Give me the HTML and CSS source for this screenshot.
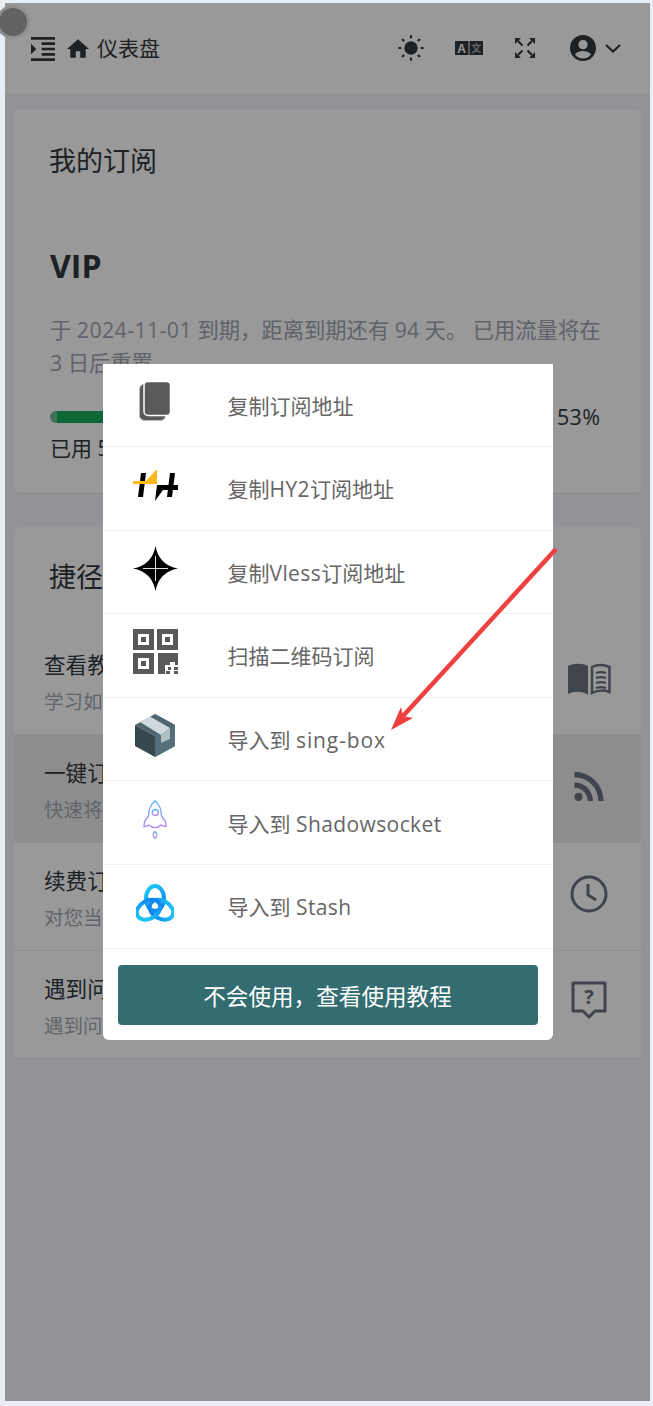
FILE: index.html
```html
<!DOCTYPE html>
<html lang="zh-CN">
<head>
<meta charset="utf-8">
<title>仪表盘</title>
<link rel="stylesheet" href="styles.css">
</head>
<body>
<div class="frame">
  <header class="topbar">
    <div class="topbar-left">
      <svg class="ic-indent" viewBox="3 3 18 18" fill="#32373c"><path d="M3 21h18v-2H3v2zM3 8v8l4-4-4-4zm8 9h10v-2H11v2zM3 3v2h18V3H3zm8 6h10V7H11v2zm0 4h10v-2H11v2z"/></svg>
      <svg class="ic-home" viewBox="2 3 20 17" fill="#32373c"><path d="M10 20v-6h4v6h5v-8h3L12 3 2 12h3v8z"/></svg>
      <span class="crumb">仪表盘</span>
    </div>
    <div class="topbar-right">
      <svg class="ic-sun" viewBox="0 0 26 26" fill="#32373c"><circle cx="13" cy="13" r="6.700"/><g stroke="#32373c" stroke-width="2.200" stroke-linecap="round"><path d="M13 1.200v1.300M13 23.500v1.300M1.200 13h1.300M23.500 13h1.300M4.700 4.700l.8.8M20.500 20.500l.8.8M4.700 21.300l.8-.8M20.500 5.500l.8-.8"/></g></svg>
      <svg class="ic-lang" viewBox="0 0 28 14"><rect width="13.500" height="14" fill="#32373c"/><rect x="14.500" width="13.500" height="14" fill="#32373c"/><text x="6.700" y="11.500" class="ic-lang-a">A</text><text x="21.200" y="11" class="ic-lang-b">文</text></svg>
      <svg class="ic-expand" viewBox="0 0 20 20" fill="#32373c" stroke="none"><path d="M0 0h6L0 6zM20 0h-6l6 6zM0 20h6l-6-6zM20 20h-6l6-6z"/><path fill="none" stroke="#32373c" stroke-width="2.200" d="M3 3l4.500 4.500M17 3l-4.500 4.500M3 17l4.500-4.500M17 17l-4.500-4.500"/></svg>
      <div class="user">
        <svg class="ic-user" viewBox="2 2 20 20" fill="#32373c"><path fill-rule="evenodd" d="M12 2a10 10 0 1 0 0 20 10 10 0 0 0 0-20zm0 3.800a3.600 3.600 0 1 1 0 7.200 3.600 3.600 0 0 1 0-7.200zm0 14.200a8 8 0 0 1-6.200-3c.9-1.700 3.600-2.700 6.200-2.700s5.300 1 6.200 2.700a8 8 0 0 1-6.200 3z"/></svg>
        <svg class="ic-chev" viewBox="0 0 16 9" fill="none" stroke="#32373c" stroke-width="2.200"><path d="M1 1l7 6.500L15 1"/></svg>
      </div>
    </div>
  </header>

  <main class="content">
    <section class="card card-sub">
      <h2 class="card-title">我的订阅</h2>
      <div class="plan">VIP</div>
      <p class="desc">于 <span class="lat">2024-11-01</span> 到期，距离到期还有 94 天。 已用流量将在 3 日后重置</p>
      <div class="progress-row">
        <div class="track"><div class="fill" style="width:53%"></div></div>
        <span class="pct">53%</span>
      </div>
      <div class="used">已用 53.20 GB / 总计 100.00 GB</div>
    </section>

    <section class="card card-links">
      <h2 class="card-title card-title-b">捷径</h2>
      <div class="row">
        <div><div class="row-t">查看教程</div><div class="row-s">学习如何使用 V2Board</div></div>
        <svg class="ric ric-book" viewBox="0 0 43 32"><path fill="#6b7380" d="M0 3C6 0 15 0 20 3v29C15 28 6 28 0 31z"/><path fill="none" stroke="#6b7380" stroke-width="2.500" d="M24 4c5-2.500 12-2.500 17.500 0v25c-5-1.800-12-1.800-17.500 1z"/><path stroke="#6b7380" stroke-width="2.200" d="M28 10c3-1 7-1 10 0M28 15c3-1 7-1 10 0M28 20c3-1 7-1 10 0M28 25c3-1 7-1 10 0"/></svg>
      </div>
      <div class="row row-hover">
        <div><div class="row-t">一键订阅</div><div class="row-s">快速将节点导入对应客户端进行使用</div></div>
        <svg class="ric ric-rss" viewBox="4 4 15.560 16" fill="#6b7380"><path d="M6.180 15.640a2.180 2.180 0 0 1 2.180 2.180C8.360 19 7.380 20 6.180 20 5 20 4 19 4 17.820a2.180 2.180 0 0 1 2.180-2.180M4 4.440A15.560 15.560 0 0 1 19.560 20h-2.830A12.730 12.730 0 0 0 4 7.270V4.440m0 5.660a9.900 9.900 0 0 1 9.900 9.900h-2.830A7.070 7.070 0 0 0 4 12.930V10.100z"/></svg>
      </div>
      <div class="row">
        <div><div class="row-t">续费订阅</div><div class="row-s">对您当前的订阅进行续费</div></div>
        <svg class="ric ric-clock" viewBox="0 0 38 38" fill="none" stroke="#6b7380" stroke-width="3"><circle cx="19" cy="19" r="17"/><path d="M18 9v11l8 5"/></svg>
      </div>
      <div class="row">
        <div><div class="row-t">遇到问题</div><div class="row-s">遇到问题可以通过工单与我们沟通</div></div>
        <svg class="ric ric-help" viewBox="0 0 38 38"><path fill="none" stroke="#6b7380" stroke-width="3" stroke-linejoin="round" d="M3 2h32v28H25l-6 6-6-6H3z"/><text x="19" y="23" class="ric-q">?</text></svg>
      </div>
    </section>
  </main>

  <div class="overlay">
    <div class="modal">
      <ul class="menu">
        <li class="item"><span class="item-ic"><svg class="i-copy" viewBox="0 0 32 40"><rect x="0.500" y="3" width="26" height="36.500" rx="5" fill="#5a5a5a" stroke="#bbb"/><rect x="5" y="0.500" width="26.500" height="34" rx="4" fill="#5a5a5a" stroke="#fff" stroke-width="1.500"/></svg></span><span class="item-t">复制订阅地址</span></li>
        <li class="item"><span class="item-ic"><svg class="i-hy" viewBox="0 0 45 32"><path d="M8 4h5l-3 24H5zM37 4h5l-3 24h-5z"/><path fill="#fdb813" d="M24 0v15H0v-3h13z"/><path d="M22 32l2-16h21v5H30z"/></svg></span><span class="item-t">复制<span class="lat">HY2</span>订阅地址</span></li>
        <li class="item"><span class="item-ic"><svg class="i-star" viewBox="0 0 45 45"><path d="M22.500 0Q26 19 45 22.500 26 26 22.500 45 19 26 0 22.500 19 19 22.500 0z"/><path stroke="#ddd" stroke-width="1" d="M22.500 10v25M10 22.500h25"/></svg></span><span class="item-t">复制<span class="lat">Vless</span>订阅地址</span></li>
        <li class="item"><span class="item-ic"><svg class="i-qr" viewBox="0 0 45 45"><g fill="#595959"><path fill-rule="evenodd" d="M0 0h21v21H0zM5 5v11h11V5zM24 0h21v21H24zM29 5v11h11V5zM0 24h21v21H0zM5 29v11h11V29z"/><path d="M8 8h5v5H8zM32 8h5v5h-5zM8 32h5v5H8zM25 24h20v12h-3v-3h-5v3h-5v9h-2v3h-5zM35 38h3v3h-3zM41 38h4v3h-4zM33 42h4v3h-4zM41 42h4v3h-4z"/></g></svg></span><span class="item-t">扫描二维码订阅</span></li>
        <li class="item"><span class="item-ic"><svg class="i-box" viewBox="0 0 42 44"><path fill="#546e7a" d="M21 0l20 11v21L21 43z"/><path fill="#4f6670" d="M21 0l20 11-20 11L1 11z"/><path fill="#37474f" d="M1 11l20 11v21L1 32z"/><path fill="#546e7a" d="M21 22l20-11v21L21 43z"/><path fill="#cfd8dc" d="M6 8l10-5.500L36 14 27 21z"/><path fill="#b0bec5" d="M27 21l9-7v11l-9 4z"/></svg></span><span class="item-t">导入到 <span class="lat-w">sing-box</span></span></li>
        <li class="item"><span class="item-ic"><svg class="i-rocket" viewBox="0 0 24 39" fill="none" stroke="url(#rk)" stroke-width="1.400"><defs><linearGradient id="rk" x1="0" y1="0" x2="0" y2="1"><stop offset="0" stop-color="#5fb6f8"/><stop offset="1" stop-color="#b88cf5"/></linearGradient></defs><path d="M12 .8C7 5 5.500 10 5.500 16L1.500 21.500 1 26.500c2 0 4-.6 5-1.500 1.500 1.500 3 2.600 6 2.600S16.500 26.500 18 25c1 .9 3 1.500 5 1.500l-.5-5L18.500 16C18.500 10 17 5 12 .8z"/><circle cx="12.300" cy="12.500" r="3"/><path d="M12 31.500c-2.500 2.500-2.500 4.500 0 7 2.500-2.500 2.500-4.500 0-7z"/></svg></span><span class="item-t">导入到 <span class="lat">Shadowsocket</span></span></li>
        <li class="item"><span class="item-ic"><svg class="i-stash" viewBox="0 0 38 38" fill="none" stroke-width="4"><defs><linearGradient id="st" gradientUnits="userSpaceOnUse" x1="5" y1="5" x2="33" y2="35"><stop offset="0" stop-color="#1fd3f6"/><stop offset="1" stop-color="#0a5fef"/></linearGradient></defs><g stroke="url(#st)"><ellipse cx="19" cy="14.500" rx="9" ry="12.500"/><ellipse cx="19" cy="14.500" rx="9" ry="12.500" transform="rotate(120 19 22)"/><ellipse cx="19" cy="14.500" rx="9" ry="12.500" transform="rotate(240 19 22)"/></g></svg></span><span class="item-t">导入到 <span class="lat">Stash</span></span></li>
      </ul>
      <div class="modal-foot"><button class="help-btn">不会使用，查看使用教程</button></div>
    </div>
  </div>
</div>

<svg class="arrow" viewBox="0 0 653 1406"><path fill="none" stroke="#ef4040" stroke-width="4.500" d="M556 549L403 716"/><path fill="#ef4040" d="M391 730l10-23 2 9 10 2z"/></svg>
<div class="touch"></div>
</body>
</html>
```
FILE: styles.css
```css
* { box-sizing: border-box; }
html, body { margin: 0; padding: 0; }
body {
  width: 653px;
  height: 1406px;
  overflow: hidden;
  background: #e9eef5;
  font-family: "Open Sans", "Noto Sans CJK SC", sans-serif;
  color: #32373c;
  position: relative;
}
.frame {
  position: relative;
  margin: 3px 3px 0 5px;
  width: 645px;
  height: 1398px;
  background: #f3f5fb;
  overflow: hidden;
}
.lat { letter-spacing: .4px; }
.lat-w { letter-spacing: .9px; }
.topbar {
  height: 90px;
  background: #fff;
  display: flex;
  align-items: center;
  justify-content: space-between;
  padding: 0 29px 0 26px;
}
.topbar-left { display: flex; align-items: center; }
.topbar-right { display: flex; align-items: center; gap: 30px; }
.ic-indent { width: 24px; height: 24px; margin-top: 2px; }
.ic-home { width: 22px; height: 19px; margin-left: 12px; }
.crumb { font-size: 21px; line-height: 30px; margin-left: 8px; }
.ic-sun { width: 26px; height: 26px; display: block; margin-right: 0; }
.ic-lang { width: 28px; height: 14px; display: block; margin-left: 1px; }
.ic-lang-a { font: 700 12px "Liberation Sans", sans-serif; fill: #fff; text-anchor: middle; }
.ic-lang-b { font: 700 10px "Noto Sans CJK SC", sans-serif; fill: #aaa; text-anchor: middle; }
.ic-expand { width: 20px; height: 20px; display: block; margin: 0 3px 0 2px; }
.user { display: flex; align-items: center; gap: 9px; margin-left: 2px; }
.ic-user { width: 26px; height: 26px; display: block; }
.ic-chev { width: 16px; height: 9px; display: block; }

.content { padding: 16px 9px 0; display: flex; flex-direction: column; gap: 34px; }
.card { background: #fff; border-radius: 6px; box-shadow: 0 1px 2px rgba(0,0,0,.04); overflow: hidden; }
.card-sub { padding: 34px 36px 30px; }
.card-title { margin: 0 0 0 -1px; font-size: 27px; line-height: 36px; font-weight: 400; }
.card-title-b { padding: 32px 36px 32px; }
.plan { margin-top: 65px; font-size: 32px; line-height: 44px; font-weight: 700; }
.desc { margin: 25px 0 0; font-size: 21.300px; line-height: 33px; color: #9fa5b0; }
.progress-row { margin-top: 26px; display: flex; align-items: center; gap: 17px; height: 24px; }
.track { flex: 1; height: 12px; background: #eceef3; border-radius: 6px; overflow: hidden; }
.fill { height: 100%; background: linear-gradient(90deg, #6cbf92 0, #6cbf92 7px, #19aa5c 7px); }
.pct { font-size: 21.500px; line-height: 24px; width: 48px; letter-spacing: .3px; }
.used { margin-top: 3.500px; font-size: 21px; line-height: 30px; }

.row {
  height: 108px;
  padding: 23px 30px 0;
  display: flex;
  justify-content: space-between;
  border-bottom: 1px solid #ebedf1;
}
.row-hover { background: #ececec; border-bottom: 0; border-radius: 0 0 4px 4px; }
.row-t { font-size: 21.600px; line-height: 30px; white-space: nowrap; }
.row-s { margin-top: 7px; font-size: 19.500px; line-height: 30px; color: #a3a9b4; white-space: nowrap; }
.ric { display: block; flex: none; }
.ric-book { width: 43px; height: 32px; margin-top: 13px; }
.ric-rss { width: 30px; height: 30px; margin: 13px 7px 0 0; }
.ric-clock { width: 38px; height: 38px; margin: 9px 3px 0 0; }
.ric-help { width: 38px; height: 38px; margin: 7px 3px 0 0; }
.ric-q { font: 700 20px "Open Sans", sans-serif; fill: #6b7380; text-anchor: middle; }

.overlay {
  position: absolute;
  inset: 0;
  background: rgba(0,0,0,.4);
  display: flex;
  align-items: center;
  justify-content: center;
}
.modal { width: 450px; height: 676px; background: #fff; border-radius: 0 0 6px 6px; overflow: hidden; }
.menu { list-style: none; margin: -.6px 0 0; padding: 0; }
.item {
  height: 83.600px;
  padding-top: 2px;
  display: grid;
  grid-template-columns: 105px 1fr;
  column-gap: 20px;
  align-items: center;
  border-bottom: 1px solid #eeeef5;
}
.item-ic { display: flex; justify-content: center; margin-top: -9px; }
.item-ic svg { display: block; }
.item-t { font-size: 21px; line-height: 30px; color: #666; white-space: nowrap; }
.i-copy { width: 32px; height: 40px; }
.i-hy { width: 45px; height: 32px; }
.i-star { width: 45px; height: 45px; }
.i-qr { width: 45px; height: 45px; }
.i-box { width: 42px; height: 44px; }
.i-rocket { width: 24px; height: 39px; }
.i-stash { width: 38px; height: 38px; }
.modal-foot { padding: 16.500px 15px 15px; }
.help-btn {
  display: block;
  width: 100%;
  height: 60px;
  border: 0;
  border-radius: 4px;
  background: #336d71;
  color: #fff;
  font-family: inherit;
  font-size: 22.600px;
}

.arrow { position: absolute; left: 0; top: 0; width: 653px; height: 1406px; pointer-events: none; }
.touch {
  position: absolute;
  left: -4px;
  top: 5px;
  width: 34px;
  height: 34px;
  border-radius: 50%;
  background: #626262;
  border: 3px solid #8f8f8f;
}
```
